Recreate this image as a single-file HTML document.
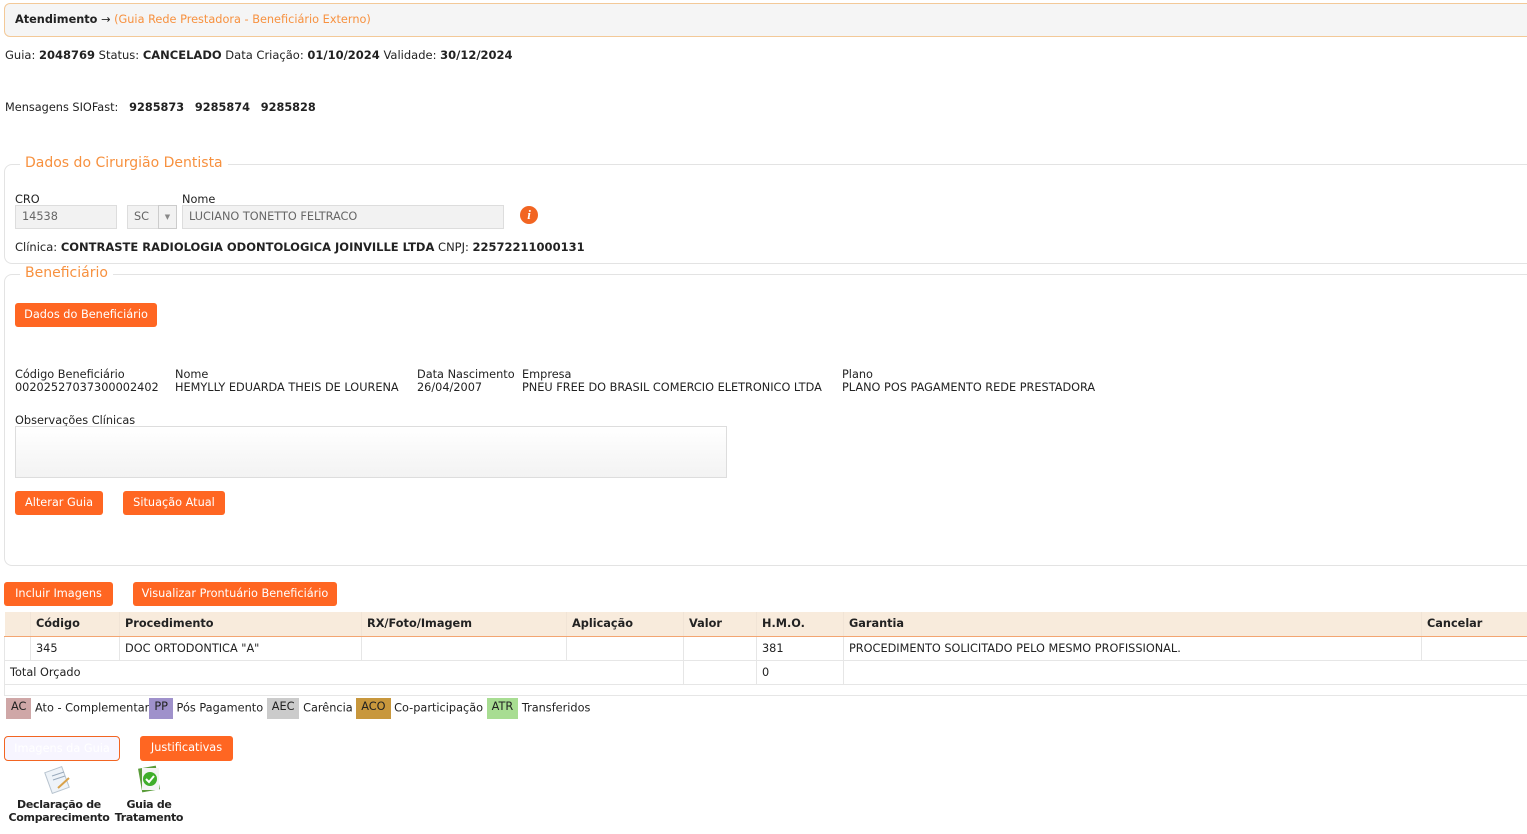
<!DOCTYPE html>
<html><head><meta charset="utf-8"><style>
*{margin:0;padding:0;box-sizing:border-box}
body{width:1527px;height:834px;overflow:hidden;background:#fff;font-family:"DejaVu Sans",Verdana,sans-serif;font-size:11.3px;color:#222;position:relative}
.a{position:absolute;white-space:nowrap}
b{font-weight:bold}
.btn{position:absolute;background:#ff6622;color:#fff;border-radius:3px;font-size:11.3px;text-align:center;line-height:24px;height:24px}
.fs{position:absolute;border:1px solid #e3e3e3;border-right:none;border-radius:8px 0 0 8px}
.leg{position:absolute;color:#f7913f;background:#fff;padding:0 5px;font-size:14px}
.inp{position:absolute;background:#f2f2f2;border:1px solid #ddd;height:24px;line-height:22px;padding-left:6px;color:#666}
table{position:absolute;border-collapse:collapse;font-size:11.3px}
td{border:1px solid #e6e6e6;height:24px;padding-left:5px}
th{background:#f8ebdc;text-align:left;padding-left:5px;height:24px;border-bottom:1px solid #f3a571;font-weight:bold;border-right:1px solid #f1e4d6}
.tag{display:inline-block;padding:0 5px;height:21px;line-height:17px;vertical-align:middle}
</style></head><body>
<div class="a" style="left:4px;top:3px;width:1530px;height:34px;background:#f5f5f5;border:1px solid #f3c998;border-radius:6px"></div>
<div class="a" style="left:15px;top:13px"><b>Atendimento</b> → <span style="color:#f7913f">(Guia Rede Prestadora - Beneficiário Externo)</span></div>
<div class="a" style="left:5px;top:48px;font-size:11.5px">Guia: <b>2048769</b> Status: <b>CANCELADO</b> Data Criação: <b>01/10/2024</b> Validade: <b>30/12/2024</b></div>
<div class="a" style="left:5px;top:101px">Mensagens SIOFast: &nbsp; <b>9285873</b> &nbsp; <b>9285874</b> &nbsp; <b>9285828</b></div>

<div class="fs" style="left:4px;top:164px;width:1530px;height:100px"></div>
<div class="leg" style="left:20px;top:155px">Dados do Cirurgião Dentista</div>
<div class="a" style="left:15px;top:193px">CRO</div>
<div class="a" style="left:182px;top:193px">Nome</div>
<div class="inp" style="left:15px;top:205px;width:102px">14538</div>
<div class="inp" style="left:127px;top:205px;width:50px">SC</div>
<div class="a" style="left:158px;top:205px;width:19px;height:24px;border:1px solid #ccc;background:#f2f2f2;color:#888;font-size:7px;text-align:center;line-height:22px">▼</div>
<div class="inp" style="left:182px;top:205px;width:322px">LUCIANO TONETTO FELTRACO</div>
<div class="a" style="left:520px;top:206px;width:18px;height:18px;border-radius:50%;background:#f26522;color:#fff;font-weight:bold;font-style:italic;text-align:center;line-height:18px;font-family:'Liberation Serif',serif;font-size:13px">i</div>
<div class="a" style="left:15px;top:240px;font-size:11.5px">Clínica: <b>CONTRASTE RADIOLOGIA ODONTOLOGICA JOINVILLE LTDA</b> CNPJ: <b>22572211000131</b></div>

<div class="fs" style="left:4px;top:274px;width:1530px;height:292px"></div>
<div class="leg" style="left:20px;top:265px">Beneficiário</div>
<div class="btn" style="left:15px;top:303px;width:142px">Dados do Beneficiário</div>
<div class="a" style="left:15px;top:368px;line-height:13px">Código Beneficiário<br>00202527037300002402</div>
<div class="a" style="left:175px;top:368px;line-height:13px">Nome<br>HEMYLLY EDUARDA THEIS DE LOURENA</div>
<div class="a" style="left:417px;top:368px;line-height:13px">Data Nascimento<br>26/04/2007</div>
<div class="a" style="left:522px;top:368px;line-height:13px">Empresa<br>PNEU FREE DO BRASIL COMERCIO ELETRONICO LTDA</div>
<div class="a" style="left:842px;top:368px;line-height:13px">Plano<br>PLANO POS PAGAMENTO REDE PRESTADORA</div>
<div class="a" style="left:15px;top:414px">Observações Clínicas</div>
<div class="a" style="left:15px;top:426px;width:712px;height:52px;border:1px solid #ddd;background:linear-gradient(#fff,#f3f3f3)"></div>
<div class="btn" style="left:15px;top:491px;width:88px">Alterar Guia</div>
<div class="btn" style="left:123px;top:491px;width:102px">Situação Atual</div>

<div class="btn" style="left:4px;top:582px;width:109px">Incluir Imagens</div>
<div class="btn" style="left:133px;top:582px;width:204px">Visualizar Prontuário Beneficiário</div>

<table style="left:4px;top:612px;width:1530px">
<tr><th style="width:26px"></th><th style="width:89px">Código</th><th style="width:242px">Procedimento</th><th style="width:205px">RX/Foto/Imagem</th><th style="width:117px">Aplicação</th><th style="width:73px">Valor</th><th style="width:87px">H.M.O.</th><th style="width:578px">Garantia</th><th>Cancelar</th></tr>
<tr><td></td><td>345</td><td>DOC ORTODONTICA "A"</td><td></td><td></td><td></td><td>381</td><td>PROCEDIMENTO SOLICITADO PELO MESMO PROFISSIONAL.</td><td></td></tr>
<tr><td colspan="5">Total Orçado</td><td></td><td>0</td><td colspan="2"></td></tr>
<tr><td colspan="9" style="height:11px"></td></tr>
</table>

<div class="a" style="left:6px;top:698px"><span class="tag" style="background:#cfa7a7">AC</span> Ato - Complementar<span class="tag" style="background:#9f91cb">PP</span> Pós Pagamento <span class="tag" style="background:#cbcbcb">AEC</span> Carência <span class="tag" style="background:#c8973c">ACO</span> Co-participação <span class="tag" style="background:#a8dd92">ATR</span> Transferidos</div>

<div class="a" style="left:4px;top:736px;width:116px;height:25px;border:1px solid #f26522;border-radius:4px;background:#f7f5ff;color:#fff;text-align:center;line-height:23px">Imagens da Guia</div>
<div class="btn" style="left:140px;top:736px;width:93px;height:25px">Justificativas</div>

<svg class="a" style="left:44px;top:764px" width="30" height="30"><rect x="4" y="5" width="18" height="22" fill="#eef3f8" stroke="#b8c4cf" transform="rotate(-20 13 16)"/><line x1="8" y1="12" x2="20" y2="8" stroke="#9ab"/><line x1="9" y1="16" x2="21" y2="12" stroke="#9ab"/><line x1="14" y1="24" x2="25" y2="14" stroke="#d9a24a" stroke-width="2"/></svg>
<svg class="a" style="left:136px;top:764px" width="28" height="30"><rect x="4" y="3" width="18" height="24" fill="#5a9c3a" transform="rotate(-10 13 15)"/><rect x="6" y="4" width="17" height="22" fill="#f4f4f4"/><circle cx="14" cy="15" r="7" fill="#3fae2a"/><path d="M10 15l3 3 5-6" stroke="#fff" stroke-width="2" fill="none"/></svg>
<div class="a" style="left:6px;top:798px;width:106px;text-align:center;font-weight:bold;line-height:13px;font-size:11px;letter-spacing:-0.3px">Declaração de<br>Comparecimento</div>
<div class="a" style="left:112px;top:798px;width:74px;text-align:center;font-weight:bold;line-height:13px;font-size:11px;letter-spacing:-0.3px">Guia de<br>Tratamento</div>
</body></html>
